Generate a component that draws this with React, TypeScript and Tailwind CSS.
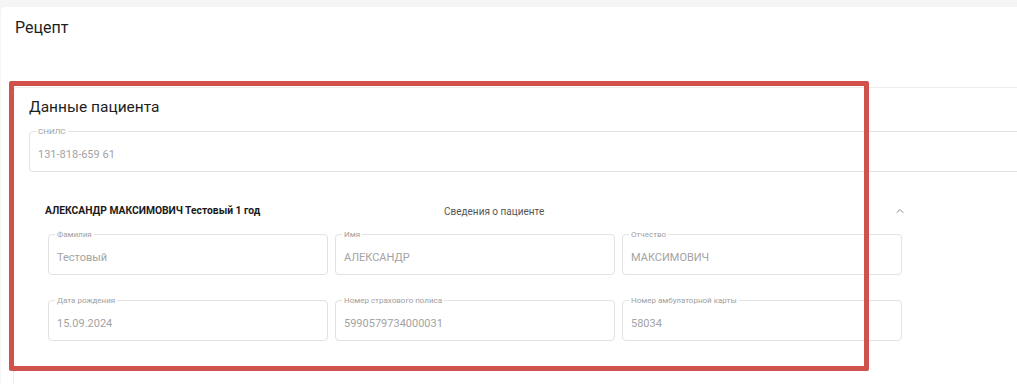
import { ChevronUp } from 'lucide-react';

type Field = { label: string; value: string; upper?: boolean };

const rows: Field[][] = [
  [
    { label: 'Фамилия', value: 'Тестовый' },
    { label: 'Имя', value: 'АЛЕКСАНДР' },
    { label: 'Отчество', value: 'МАКСИМОВИЧ' },
  ],
  [
    { label: 'Дата рождения', value: '15.09.2024' },
    { label: 'Номер страхового полиса', value: '5990579734000031' },
    { label: 'Номер амбулаторной карты', value: '58034' },
  ],
];

function OutlinedField({ label, value, upper, className }: Field & { className?: string }) {
  return (
    <div className={`relative h-[41px] rounded-[4px] border border-[#e2e2e2] flex items-center px-[8px] ${className ?? ''}`}>
      <span
        className={`absolute -top-[6px] left-[6px] bg-white px-[2px] text-[8px] leading-[11px] text-[#a0a0a0] ${upper ? 'uppercase' : ''}`}
      >
        {label}
      </span>
      <span className="mt-[6px] text-[11px] leading-[13px] text-[#a3a3a3]">{value}</span>
    </div>
  );
}

function App() {
  return (
    <div className="relative min-h-screen overflow-hidden bg-[#f5f5f5] font-['Roboto',sans-serif]">
      <div className="mt-[7px] ml-px w-[1100px] min-h-[377px] rounded-tl-[4px] bg-white">
        {/* Card header */}
        <div className="h-[80px] px-[14px] pt-[9px]">
          <h1 className="text-[16px] leading-[24px] text-[#1e1e1e]">Рецепт</h1>
        </div>

        {/* Patient data */}
        <div className="ml-[12px] min-h-[297px] rounded-tl-[4px] border-l border-t border-[#ececec] pl-[15px] pt-[7px]">
          <h2 className="text-[15.5px] leading-[24px] text-[#1e1e1e]">Данные пациента</h2>

          <OutlinedField label="СНИЛС" value="131-818-659 61" upper className="mt-[12px] w-[1060px]" />

          {/* Accordion */}
          <div className="mt-[28px] flex h-[22px] w-[877px] items-center pl-[16px]">
            <span className="w-[399px] text-[10.3px] font-bold text-[#1a1a1a]">
              АЛЕКСАНДР МАКСИМОВИЧ Тестовый 1 год
            </span>
            <span className="flex-1 text-[10px] text-[#555]">Сведения о пациенте</span>
            <ChevronUp className="h-[12px] w-[12px] text-[#888]" strokeWidth={2} />
          </div>

          <div className="mt-[12px] flex w-[873px] flex-col gap-[25px] pl-[19px]">
            {rows.map((row, i) => (
              <div key={i} className="grid grid-cols-3 gap-[7px]">
                {row.map((f) => (
                  <OutlinedField key={f.label} {...f} />
                ))}
              </div>
            ))}
          </div>
        </div>
      </div>

      {/* Annotation frame */}
      <div className="pointer-events-none absolute left-[9px] top-[81px] h-[290px] w-[860px] rounded-[2px] border-[5px] border-[#d1524a]" />
    </div>
  );
}

export default App;
